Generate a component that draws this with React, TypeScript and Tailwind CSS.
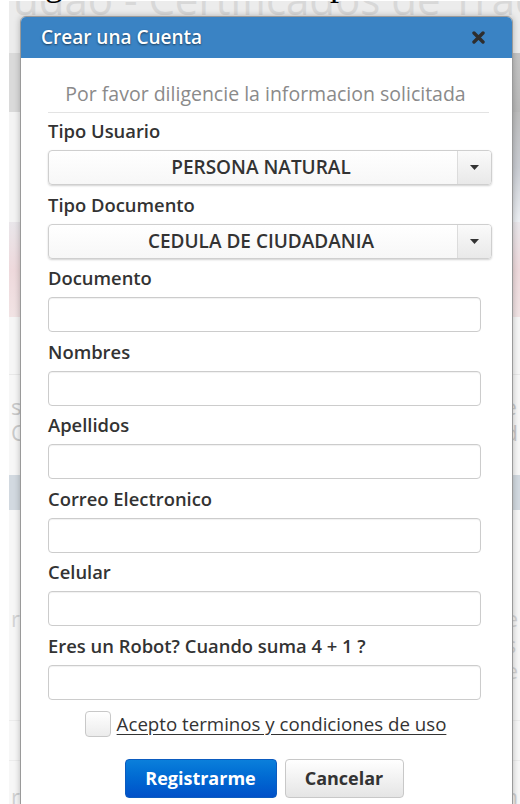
import React from "react";

const labels = [
  "Documento",
  "Nombres",
  "Apellidos",
  "Correo Electronico",
  "Celular",
  "Eres un Robot? Cuando suma 4 + 1 ?",
];

function Caret() {
  return (
    <svg width="9" height="5" viewBox="0 0 9 5" className="block">
      <path d="M0 0h9L4.5 5z" fill="#333" />
    </svg>
  );
}

function CloseIcon() {
  return (
    <svg width="13" height="13" viewBox="0 0 13 13" className="block">
      <path d="M2 2l9 9M11 2l-9 9" stroke="#2e2e2e" strokeWidth="3.4" strokeLinecap="round" />
    </svg>
  );
}

function SelectBox({ value }: { value: string }) {
  return (
    <div className="flex h-[35px] w-[444px] overflow-hidden rounded-[4px] border border-[#cfcfcf] bg-gradient-to-b from-white to-[#f7f7f7] shadow-[0_1px_2px_rgba(0,0,0,0.18)]">
      <div className="flex flex-1 items-center justify-center pl-[16px] text-[19px] font-semibold text-[#333]">{value}</div>
      <div className="flex w-[34px] items-center justify-center border-l border-[#dcdcdc] bg-gradient-to-b from-[#fafafa] to-[#e9e9e9]">
        <Caret />
      </div>
    </div>
  );
}

function Field({ label }: { label: string }) {
  return (
    <div className="flex flex-col gap-[8px]">
      <label className="text-[18.4px] leading-[22px] font-semibold text-[#333]">{label}</label>
      <div className="h-[35px] w-[433px] rounded-[4px] border border-[#cccccc] bg-white shadow-[inset_0_1px_1px_rgba(0,0,0,0.06)]" />
    </div>
  );
}

// faded page behind the dialog
function Backdrop() {
  return (
    <div className="flex h-full flex-col pl-[9px]">
      <div className="relative z-10 h-[4px] overflow-visible whitespace-nowrap bg-white">
        <div className="-ml-[12px] -mt-[35px] text-[36px] leading-[36px] text-black" style={{ fontFamily: '"Liberation Serif", serif' }}>
          Juzgado - Certificados para Tradicion
        </div>
      </div>
      <div className="flex flex-1 flex-col bg-[#e4e4e4]">
        <div className="h-[52px] overflow-hidden whitespace-nowrap bg-[#ececec] text-[42px] leading-[52px] text-[#d8d8d8]">
          <div className="-mt-[28px] pl-[4px]" style={{ fontFamily: '"Open Sans", sans-serif' }}>
            udao - Certificados de Tradicion
          </div>
        </div>
        <div className="flex h-[59px] justify-between bg-[#dadada]">
          <div />
          <div className="w-[10px] bg-gradient-to-b from-[#c4c4c4] to-[#b9b9b9]" />
        </div>
        <div className="flex h-[110px] justify-between bg-[#f4f4f4]">
          <div />
          <div className="w-[10px] bg-gradient-to-b from-[#bdbdbd] via-[#c9ccd2] to-[#eceff3]" />
        </div>
        <div className="h-[95px] bg-gradient-to-b from-[#e9e6ea] via-[#eed9dc] to-[#f1e3e4]" />
        <div className="h-[58px] border-b border-[#e8e8e8] bg-[#f6f6f6]" />
        <div className="flex h-[100px] justify-between bg-[#f7f7f7] px-[2px] pt-[18px] text-[22px] leading-[26px] text-[#c9c9c9]" style={{ fontFamily: '"Open Sans", sans-serif' }}>
          <div className="flex flex-col">
            <span>s</span>
            <span>C</span>
          </div>
          <div className="flex flex-col">
            <span>e</span>
            <span>d</span>
          </div>
        </div>
        <div className="h-[35px] bg-[#d2d9e0]" />
        <div className="flex h-[210px] justify-between bg-[#f7f7f7] px-[2px] pt-[95px] text-[22px] leading-[26px] text-[#d4d4d4]" style={{ fontFamily: '"Open Sans", sans-serif' }}>
          <span>re</span>
          <div className="flex flex-col">
            <span>e</span>
            <span>s</span>
            <span>e</span>
          </div>
        </div>
        <div className="h-[40px] border-t border-[#ececec] bg-[#f7f7f7]" />
        <div className="flex h-[50px] justify-between border-t border-[#ececec] bg-[#f7f7f7] px-[2px] pt-[22px] text-[22px] leading-[26px] text-[#d0d0d0]">
          <span>re</span>
          <span>m</span>
        </div>
      </div>
    </div>
  );
}

export default function App() {
  return (
    <div className="relative h-[804px] w-[520px] overflow-hidden bg-white" style={{ fontFamily: '"Open Sans", sans-serif' }}>
      <Backdrop />

      <div className="absolute left-[20px] top-[16px] z-20 w-[493px] rounded-t-[6px] border border-[#9a9a9a] bg-white shadow-[0_0_6px_rgba(0,0,0,0.25)]">
        <div className="flex h-[41px] items-center justify-between rounded-t-[5px] bg-[#3a83c4] pl-[20px] pr-[27px]">
          <h2 className="text-[19px] font-semibold text-white [text-shadow:0_1px_2px_rgba(0,0,0,0.55)]">Crear una Cuenta</h2>
          <CloseIcon />
        </div>

        <div className="flex flex-col pb-[8px] pl-[27px] pr-[20px]">
          <p className="mr-[9px] pt-[24px] text-center text-[19.5px] leading-[24px] text-[#8a8a8a]">Por favor diligencie la informacion solicitada</p>
          <div className="mt-[6px] mr-[3px] h-px bg-[#e3e3e3]" />

          <div className="mt-[7px] flex flex-col gap-[8px]">
            <label className="text-[18.4px] leading-[22px] font-semibold text-[#333]">Tipo Usuario</label>
            <SelectBox value="PERSONA NATURAL" />
          </div>
          <div className="mt-[9px] flex flex-col gap-[8px]">
            <label className="text-[18.4px] leading-[22px] font-semibold text-[#333]">Tipo Documento</label>
            <SelectBox value="CEDULA DE CIUDADANIA" />
          </div>

          <div className="mt-[8px] flex flex-col gap-[8.5px]">
            {labels.map((l) => (
              <Field key={l} label={l} />
            ))}
          </div>

          <label className="mr-[9px] mt-[11px] flex items-center justify-center gap-[6px]">
            <span className="h-[26px] w-[26px] rounded-[4px] border border-[#c8c8c8] bg-gradient-to-b from-white to-[#ececec]" />
            <span className="text-[18.7px] leading-[24px] text-[#333] underline underline-offset-[3px]">Acepto terminos y condiciones de uso</span>
          </label>

          <div className="mr-[12px] mt-[22px] flex justify-center gap-[8px]">
            <button className="h-[39px] w-[152px] rounded-[4px] border border-[#0b5bbf] bg-gradient-to-b from-[#0b7fdb] to-[#0250c8] text-[18px] font-bold text-white">
              Registrarme
            </button>
            <button className="h-[39px] w-[119px] rounded-[4px] border border-[#c8c8c8] bg-gradient-to-b from-white to-[#e5e5e5] text-[18px] font-bold text-[#333]">
              Cancelar
            </button>
          </div>
        </div>
      </div>
    </div>
  );
}
